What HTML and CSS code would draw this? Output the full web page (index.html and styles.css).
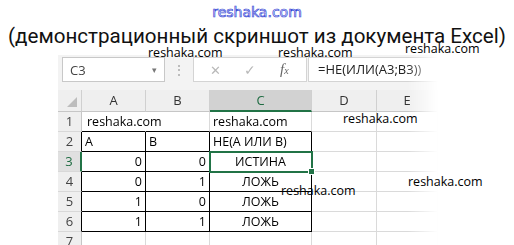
FILE: index.html
```html
<!DOCTYPE html>
<html lang="ru">
<head>
    <meta charset="UTF-8">
    <title>НЕ(ИЛИ) в Excel</title>
    <link rel="stylesheet" href="styles.css">
</head>
<body>
    <div class="site">reshaka.com</div>
    <h1>(демонстрационный скриншот из документа Excel)</h1>

    <div class="excel">
        <div class="fbar">
            <div class="namebox"><span>C3</span><span class="drop">&#9662;</span></div>
            <div class="dots">&#8942;</div>
            <div class="btns">
                <span class="x">&#10005;</span>
                <span class="ok">&#10003;</span>
                <span class="fx">f<small>x</small></span>
            </div>
            <div class="formula">=НЕ(ИЛИ(A3;B3))</div>
        </div>

        <div class="sheet">
            <div class="hd corner"><i></i></div>
            <div class="hd">A</div>
            <div class="hd">B</div>
            <div class="hd sel">C</div>
            <div class="hd">D</div>
            <div class="hd">E</div>

            <div class="rh">1</div>
            <div class="c over nor bb">reshaka.com</div>
            <div class="c bb"></div>
            <div class="c bb">reshaka.com</div>
            <div class="c"></div>
            <div class="c"></div>

            <div class="rh br">2</div>
            <div class="c b">A</div>
            <div class="c b">B</div>
            <div class="c b">НЕ(А ИЛИ В)</div>
            <div class="c"></div>
            <div class="c"></div>

            <div class="rh br rsel">3</div>
            <div class="c b num">0</div>
            <div class="c b num">0</div>
            <div class="c b mid cur">ИСТИНА</div>
            <div class="c"></div>
            <div class="c"></div>

            <div class="rh br">4</div>
            <div class="c b num">0</div>
            <div class="c b num">1</div>
            <div class="c b mid">ЛОЖЬ</div>
            <div class="c"></div>
            <div class="c"></div>

            <div class="rh br">5</div>
            <div class="c b num">1</div>
            <div class="c b num">0</div>
            <div class="c b mid">ЛОЖЬ</div>
            <div class="c"></div>
            <div class="c"></div>

            <div class="rh br">6</div>
            <div class="c b num">1</div>
            <div class="c b num">1</div>
            <div class="c b mid">ЛОЖЬ</div>
            <div class="c"></div>
            <div class="c"></div>

            <div class="rh">7</div>
            <div class="c"></div>
            <div class="c"></div>
            <div class="c"></div>
            <div class="c"></div>
            <div class="c"></div>
        </div>
    </div>

    <!-- водяные знаки поверх картинки -->
    <span class="wm wm1">reshaka.com</span>
    <span class="wm wm2">reshaka.com</span>
    <span class="wm wm3">reshaka.com</span>
    <span class="wm wm4">reshaka.com</span>
    <span class="wm wm5">reshaka.com</span>
    <span class="wm wm6">reshaka.com</span>
</body>
</html>
```
FILE: styles.css
```css
body {
    margin: 0;
    position: relative;
    height: 245px;
    font-family: "Open Sans", Arial, sans-serif;
    background: #fff;
    color: #000;
    overflow: hidden;
}
.site {
    text-align: center;
    font-family: "DejaVu Sans", sans-serif;
    font-size: 14px;
    line-height: 18px;
    padding-top: 3px;
    color: #fff;
    -webkit-text-stroke: 0.7px #3446d6;
}
h1 {
    margin: 0;
    text-align: center;
    white-space: nowrap;
    font-family: Roboto, sans-serif;
    font-weight: normal;
    font-size: 20.6px;
    line-height: 30px;
    color: #111;
}
.excel {
    margin: 4px 0 0 58px;
    width: 380px;
    background: #f3f3f3;
    padding-top: 2px;
    -webkit-mask-image: linear-gradient(to right, #000 92%, transparent);
    mask-image: linear-gradient(to right, #000 92%, transparent);
}
.fbar {
    display: flex;
    height: 25px;
}
.namebox {
    margin-left: 4px;
    width: 103px;
    box-sizing: border-box;
    border: 1px solid #c8c8c8;
    background: #fff;
    display: flex;
    align-items: center;
    justify-content: space-between;
    padding: 0 7px 0 7px;
    font-size: 13px;
    color: #444;
}
.drop {
    font-size: 9px;
    color: #777;
}
.dots {
    width: 28px;
    text-align: center;
    color: #aaa;
    font-size: 14px;
    line-height: 25px;
}
.btns {
    width: 114px;
    box-sizing: border-box;
    border: 1px solid #d4d4d4;
    background: #fff;
    display: flex;
    align-items: center;
    padding-left: 16px;
}
.btns .x {
    width: 34px;
    color: #b8b8b8;
    font-size: 13px;
}
.btns .ok {
    width: 36px;
    color: #b8b8b8;
    font-size: 14px;
}
.btns .fx {
    font-family: "Liberation Serif", serif;
    font-style: italic;
    color: #666;
    font-size: 15px;
}
.btns .fx small {
    font-size: 10px;
}
.formula {
    flex: 1;
    margin-left: 1px;
    background: #fff;
    border: 1px solid #d4d4d4;
    border-right: none;
    padding-left: 9px;
    font-size: 13px;
    line-height: 23px;
    color: #222;
}
.sheet {
    margin-top: 8px;
    display: grid;
    grid-template-columns: 24px 64px 64px 102px 65px 61px;
    grid-template-rows: 22px repeat(7, 20px);
    background: #fff;
    font-size: 12.5px;
}
.hd {
    background: #efefef;
    border-right: 1px solid #d0d0d0;
    border-bottom: 1px solid #c6c6c6;
    text-align: center;
    line-height: 21px;
    color: #333;
    font-size: 13px;
}
.corner {
    position: relative;
}
.corner i {
    position: absolute;
    right: 4px;
    bottom: 4px;
    width: 10px;
    height: 10px;
    background: #bdbdbd;
    clip-path: polygon(100% 0, 100% 100%, 0 100%);
}
.hd.sel {
    background: #d2d2d2;
    border-bottom: 2px solid #217346;
    color: #1e6b41;
}
.rh {
    background: #efefef;
    border-right: 1px solid #c6c6c6;
    border-bottom: 1px solid #d8d8d8;
    text-align: center;
    line-height: 19px;
    color: #444;
    font-size: 13px;
}
.rh.br {
    border-right-color: #000;
}
.rh.rsel {
    background: #e0e0e0;
    border-right: 2px solid #217346;
    color: #1e6b41;
}
.c {
    border-right: 1px solid #dadada;
    border-bottom: 1px solid #dadada;
    line-height: 19px;
    padding: 0 3px;
    white-space: nowrap;
    overflow: hidden;
}
.c.over {
    overflow: visible;
    position: relative;
    z-index: 1;
    padding-left: 5px;
}
.c.nor {
    border-right-color: #fff;
}
.c.bb {
    border-bottom-color: #000;
}
.c.b {
    border-right-color: #000;
    border-bottom-color: #000;
}
.num {
    text-align: right;
}
.mid {
    text-align: center;
}
.cur {
    position: relative;
    outline: 2px solid #217346;
    outline-offset: -1px;
    overflow: visible;
}
.cur::after {
    content: "";
    position: absolute;
    right: -4px;
    bottom: -4px;
    width: 5px;
    height: 5px;
    background: #217346;
    border: 1px solid #fff;
}
.wm {
    position: absolute;
    font-family: "Open Sans", Arial, sans-serif;
    font-size: 12.5px;
    line-height: 16px;
    color: #000;
    z-index: 2;
}
.wm1 { left: 148px; top: 45px; }
.wm2 { left: 278px; top: 45px; }
.wm3 { left: 405px; top: 41px; }
.wm4 { left: 343px; top: 111px; }
.wm5 { left: 408px; top: 174px; }
.wm6 { left: 281px; top: 183px; }
```
